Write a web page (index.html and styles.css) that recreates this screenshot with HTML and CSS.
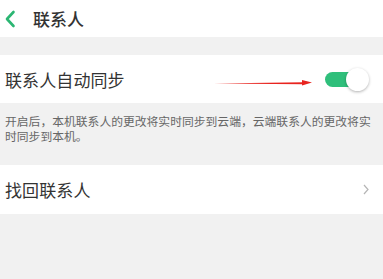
FILE: index.html
```html
<!DOCTYPE html>
<html lang="zh">
<head>
<meta charset="utf-8">
<link rel="stylesheet" href="styles.css">
</head>
<body>
<div class="page">
  <header class="header">
    <svg class="back" width="12" height="18" viewBox="0 0 12 18"><path d="M9.5 2 L3 9 L9.5 16" fill="none" stroke="#2bb673" stroke-width="2.6" stroke-linecap="round" stroke-linejoin="round"/></svg>
    <span class="title">联系人</span>
  </header>
  <div class="gap"></div>
  <div class="row sync">
    <span class="label">联系人自动同步</span>
    <svg class="arrow" width="100" height="8" viewBox="0 0 100 8"><path d="M0 4.6 L90 3.2 L90 5.2 Z" fill="#e8241f"/><path d="M88 1 L98 3.6 L88 6.6 Z" fill="#e8241f"/></svg>
    <div class="toggle"><span class="knob"></span></div>
  </div>
  <p class="desc">开启后，本机联系人的更改将实时同步到云端，云端联系人的更改将实<br>时同步到本机。</p>
  <div class="row">
    <span class="label">找回联系人</span>
    <svg class="chev" width="6" height="11" viewBox="0 0 6 11"><path d="M1 1 L5 5.5 L1 10" fill="none" stroke="#b5b5b5" stroke-width="1.2"/></svg>
  </div>
</div>
</body>
</html>
```
FILE: styles.css
```css
html, body {
  margin: 0;
  padding: 0;
  background: #f1f1f1;
  font-family: "Noto Sans CJK SC", "Noto Sans", sans-serif;
}
.page {
  width: 383px;
  height: 279px;
  overflow: hidden;
  background: #f1f1f1;
}
.header {
  height: 37px;
  background: #ffffff;
  display: flex;
  align-items: center;
  padding-left: 4px;
}
.back {
  display: block;
  margin-top: 1px;
}
.title {
  margin-left: 17px;
  font-size: 17px;
  font-weight: 500;
  color: #333333;
  margin-top: -1px;
}
.gap {
  height: 18px;
}
.row {
  position: relative;
  height: 49px;
  background: #ffffff;
  display: flex;
  align-items: center;
  justify-content: space-between;
  padding: 0 14px 0 5px;
}
.sync {
  height: 48px;
  padding-right: 13px;
}
.label {
  font-size: 17px;
  color: #333333;
  letter-spacing: 0.1px;
}
.arrow {
  position: absolute;
  left: 214px;
  top: 24px;
}
.toggle {
  position: relative;
  width: 32px;
  height: 15px;
  border-radius: 8px;
  background: #2fbf7b;
  margin-right: 13px;
}
.knob {
  position: absolute;
  left: 21px;
  top: -4px;
  width: 23px;
  height: 23px;
  border-radius: 50%;
  background: #ffffff;
  box-shadow: 0 1px 3px rgba(0,0,0,0.3);
}
.desc {
  margin: 0;
  padding: 10px 0 22px 5px;
  font-size: 11.8px;
  line-height: 15px;
  color: #666666;
  height: 30px;
  white-space: nowrap;
}
.chev {
  display: block;
}
```
